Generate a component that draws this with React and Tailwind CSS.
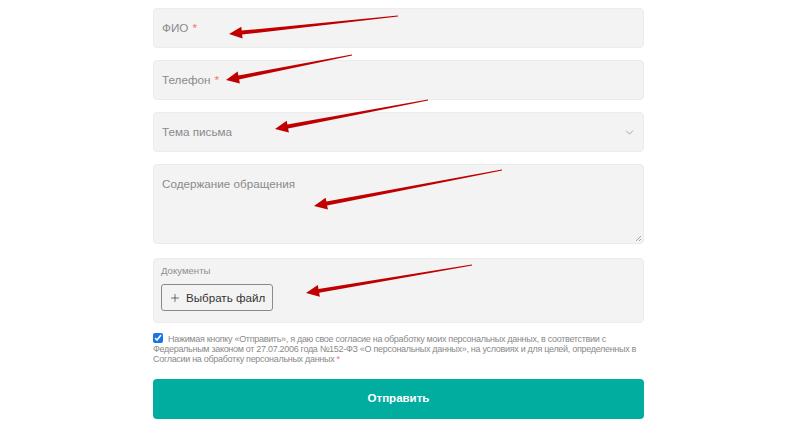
import React from 'react';
import { ChevronDown, Plus } from 'lucide-react';

// red pointer arrows drawn on top of the screenshot
const arrows = [
    [398, 16, 229, 34],
    [352, 55, 226, 80],
    [428, 100, 275, 129],
    [502, 170, 314, 206],
    [472, 265, 306, 293],
];

const arrowPoints = ([tx, ty, hx, hy]) => {
    const len = Math.hypot(hx - tx, hy - ty);
    const dx = (hx - tx) / len;
    const dy = (hy - ty) / len;
    const nx = -dy;
    const ny = dx;
    const headLen = 13;
    const bx = hx - dx * headLen;
    const by = hy - dy * headLen;
    const p = (x, y) => `${x.toFixed(1)},${y.toFixed(1)}`;
    return [
        p(tx + nx * 0.6, ty + ny * 0.6),
        p(bx + nx * 2, by + ny * 2),
        p(bx + nx * 6, by + ny * 6),
        p(hx, hy),
        p(bx - nx * 6, by - ny * 6),
        p(bx - nx * 2, by - ny * 2),
        p(tx - nx * 0.6, ty - ny * 0.6),
    ].join(' ');
};

const Field = ({ children, className = '' }) => (
    <div className={`bg-[#f3f3f3] border border-[#ececec] rounded-[4px] ${className}`}>{children}</div>
);

const App = () => {
    return (
        <div className="relative w-[800px] h-[433px] bg-white overflow-hidden font-['Liberation_Sans',Arial,sans-serif]">
            <div className="w-[491px] ml-[153px] pt-[8px] flex flex-col">
                <Field className="h-[40px] flex items-center px-[8px] text-[11.7px] text-[#8a8a8a]">
                    ФИО <span className="text-[#f07070] ml-[4px]">*</span>
                </Field>
                <Field className="h-[40px] mt-[12px] flex items-center px-[8px] text-[11.7px] text-[#8a8a8a]">
                    Телефон <span className="text-[#f07070] ml-[4px]">*</span>
                </Field>
                <Field className="h-[40px] mt-[12px] flex items-center justify-between pl-[8px] pr-[7px] text-[11.7px] text-[#8a8a8a]">
                    <span>Тема письма</span>
                    <ChevronDown className="w-[13px] h-[13px] text-[#9a9a9a]" strokeWidth={1.6} />
                </Field>
                <Field className="relative h-[80px] mt-[12px] px-[8px] pt-[10px] text-[11.7px] text-[#8a8a8a]">
                    Содержание обращения
                    <svg className="absolute right-[1px] bottom-[1px]" width="7" height="7" viewBox="0 0 7 7">
                        <path d="M6 1L1 6M6 4L4 6" stroke="#9a9a9a" strokeWidth="0.9" />
                    </svg>
                </Field>
                <Field className="h-[65px] mt-[14px] px-[7px] pt-[6px]">
                    <div className="text-[9.6px] leading-[12px] text-[#8f8f8f]">Документы</div>
                    <button className="mt-[7px] h-[27px] flex items-center gap-[5px] px-[7px] border border-[#8a8a8a] rounded-[3px] text-[11.6px] text-[#333] whitespace-nowrap">
                        <Plus className="w-[12px] h-[12px]" strokeWidth={1.4} />
                        Выбрать файл
                    </button>
                </Field>
                <label className="mt-[10px] text-[9px] tracking-[-0.3px] leading-[10px] text-[#8a8a8a]">
                    <input type="checkbox" defaultChecked className="w-[10px] h-[10px] align-[-1px] mr-[5px] accent-[#1a73e8]" />
                    Нажимая кнопку «Отправить», я даю свое согласие на обработку моих персональных данных, в соответствии с Федеральным законом от 27.07.2006 года №152-ФЗ «О персональных данных», на условиях и для целей, определенных в Согласии на обработку персональных данных <span className="text-[#f07070]">*</span>
                </label>
                <button className="mt-[15px] h-[40px] rounded-[4px] bg-[#00ad9f] text-white font-bold text-[11.5px]">
                    Отправить
                </button>
            </div>
            <svg className="absolute inset-0 pointer-events-none" width="800" height="433">
                {arrows.map((a, i) => (
                    <polygon key={i} points={arrowPoints(a)} fill="#c00000" />
                ))}
            </svg>
        </div>
    );
};

export default App;
